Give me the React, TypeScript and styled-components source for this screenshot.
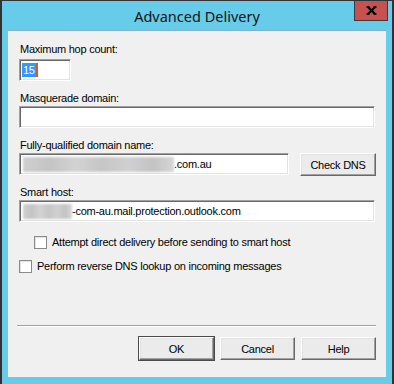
import styled, { createGlobalStyle } from "styled-components";

const GlobalStyle = createGlobalStyle`
    html, body {
        margin: 0;
        padding: 0;
        background: #ffffff;
    }
    body {
        font-family: "Liberation Sans", Arial, sans-serif;
    }
`;

const Window = styled.div`
    position: relative;
    width: 394px;
    height: 384px;
    box-sizing: border-box;
    display: flex;
    flex-direction: column;
    padding: 0 6px 7px;
    background: #67cbea;
    border-top: 1px solid #2f3335;
    border-left: 2px solid #2f3335;
    border-right: 2px solid #2f3335;
    overflow: hidden;
`;

const TitleBar = styled.div`
    height: 29px;
    display: flex;
    align-items: center;
    justify-content: center;
    font-family: "Noto Sans", "Open Sans", sans-serif;
    font-size: 14.5px;
    color: #141414;
    user-select: none;
`;

const CloseButton = styled.div`
    position: absolute;
    top: -1px;
    right: 4px;
    width: 34px;
    height: 21px;
    box-sizing: border-box;
    display: flex;
    align-items: center;
    justify-content: center;
    background: #c75050;
    border: 1px solid #3b3b3b;
    border-top: none;
`;

const Client = styled.div`
    flex: 1;
    display: flex;
    flex-direction: column;
    padding: 12px 11px 17px 11px;
    background: #f0f0f0;
    border-top: 1px solid #7fb0d0;
    font-size: 11px;
    letter-spacing: -0.25px;
    color: #000;
`;

const Field = styled.div<{ top: number; labelGap: number }>`
    display: flex;
    flex-direction: column;
    gap: ${({ labelGap }) => `${labelGap}px`};
    margin-top: ${({ top }) => `${top}px`};
`;

const Label = styled.div`
    height: 13px;
    line-height: 13px;
    padding-left: 1px;
    white-space: nowrap;
`;

const TextBox = styled.div<{ width?: number; grow?: boolean }>`
    box-sizing: border-box;
    height: 22px;
    flex: ${({ grow }) => (grow ? "1 1 auto" : "none")};
    ${({ width }) => (width ? `width: ${width}px; align-self: flex-start;` : "")}
    display: flex;
    align-items: center;
    padding-left: 2px;
    background: #ffffff;
    border-top: 1px solid #a0a0a0;
    border-left: 1px solid #a0a0a0;
    border-bottom: 1px solid #ffffff;
    border-right: 1px solid #ffffff;
    box-shadow: inset 1px 1px 0 #696969, inset -1px -1px 0 #e3e3e3;
    white-space: nowrap;
    overflow: hidden;
`;

const Selected = styled.span`
    display: inline-block;
    height: 14px;
    line-height: 14px;
    padding: 0 1px;
    background: #3399ff;
    color: #ffffff;
`;

const Caret = styled.span`
    display: inline-block;
    width: 2px;
    height: 14px;
    background: #c8641e;
`;

const Redacted = styled.span<{ width: number }>`
    display: inline-block;
    width: ${({ width }) => `${width}px`};
    height: 15px;
    margin-left: 1px;
    background: linear-gradient(
        90deg,
        #cfcfcf 0%,
        #c4c4c4 18%,
        #d3d3d3 35%,
        #c6c6c6 52%,
        #d0d0d0 70%,
        #c3c3c3 86%,
        #d6d6d6 100%
    );
    filter: blur(1px);
`;

const Row = styled.div`
    display: flex;
    align-items: flex-start;
    gap: 11px;
    height: 23px;
    margin-right: -1px;
`;

const Button = styled.div<{ isDefault?: boolean; width?: number }>`
    box-sizing: border-box;
    width: ${({ width }) => `${width ?? 75}px`};
    height: 23px;
    flex: none;
    display: flex;
    align-items: center;
    justify-content: center;
    background: #ebebeb;
    border-top: 1px solid #ffffff;
    border-left: 1px solid #ffffff;
    border-bottom: 1px solid #696969;
    border-right: 1px solid #696969;
    box-shadow: inset -1px -1px 0 #a0a0a0, inset 1px 1px 0 #e3e3e3
        ${({ isDefault }) => (isDefault ? ", 0 0 0 1px #4a4a4a" : "")};
    white-space: nowrap;
    user-select: none;
`;

const CheckRow = styled.label<{ indent: number; top: number }>`
    display: flex;
    align-items: center;
    gap: 5px;
    height: 13px;
    margin-top: ${({ top }) => `${top}px`};
    padding-left: ${({ indent }) => `${indent}px`};
    line-height: 13px;
    white-space: nowrap;
`;

const CheckBox = styled.span`
    box-sizing: border-box;
    width: 13px;
    height: 13px;
    flex: none;
    background: #ffffff;
    border: 1px solid #8a8a8a;
    box-shadow: inset 1px 1px 0 #e4e4e4;
`;

const Spacer = styled.div`
    flex: 1;
`;

const Separator = styled.div`
    height: 1px;
    margin: 0 -1px 0 -2px;
    background: #a0a0a0;
    border-bottom: 1px solid #ffffff;
`;

const Footer = styled.div`
    display: flex;
    justify-content: flex-end;
    gap: 6px;
    margin: 10px -1px 0 0;
`;

const CloseGlyph = () => (
    <svg width="11" height="9" viewBox="0 0 11 9">
        <path d="M2 1 L9 8 M9 1 L2 8" stroke="#000" strokeWidth="2.2" />
        <path d="M0.5 1 H3.5 M7.5 1 H10.5 M0.5 8 H3.5 M7.5 8 H10.5" stroke="#000" strokeWidth="1.4" />
    </svg>
);

export default function App() {
    return (
        <>
            <GlobalStyle />
            <Window>
                <TitleBar>Advanced Delivery</TitleBar>
                <CloseButton>
                    <CloseGlyph />
                </CloseButton>
                <Client>
                    <Field top={0} labelGap={3}>
                        <Label>Maximum hop count:</Label>
                        <TextBox width={52}>
                            <Selected>15</Selected>
                            <Caret />
                        </TextBox>
                    </Field>
                    <Field top={11} labelGap={1}>
                        <Label>Masquerade domain:</Label>
                        <TextBox />
                    </Field>
                    <Field top={11} labelGap={1}>
                        <Label>Fully-qualified domain name:</Label>
                        <Row>
                            <TextBox grow>
                                <Redacted width={151} />
                                .com.au
                            </TextBox>
                            <Button width={76}>Check DNS</Button>
                        </Row>
                    </Field>
                    <Field top={10} labelGap={1}>
                        <Label>Smart host:</Label>
                        <TextBox>
                            <Redacted width={49} />
                            -com-au.mail.protection.outlook.com
                        </TextBox>
                    </Field>
                    <CheckRow indent={15} top={14}>
                        <CheckBox />
                        Attempt direct delivery before sending to smart host
                    </CheckRow>
                    <CheckRow indent={0} top={11}>
                        <CheckBox />
                        Perform reverse DNS lookup on incoming messages
                    </CheckRow>
                    <Spacer />
                    <Separator />
                    <Footer>
                        <Button isDefault>OK</Button>
                        <Button>Cancel</Button>
                        <Button>Help</Button>
                    </Footer>
                </Client>
            </Window>
        </>
    );
}
